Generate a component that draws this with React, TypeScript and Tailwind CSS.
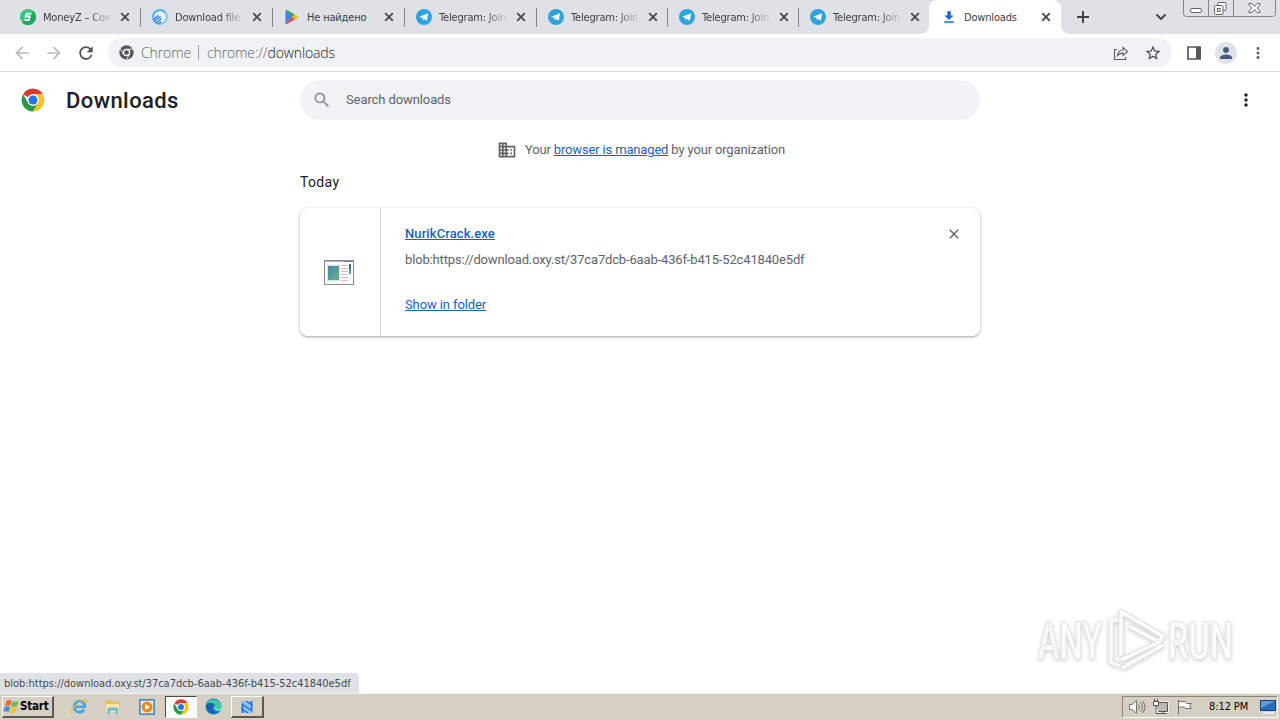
import React from "react";
import {
  MdArrowBack,
  MdArrowForward,
  MdClose,
  MdDomain,
  MdMoreVert,
  MdPerson,
  MdRefresh,
  MdSearch,
  MdStarBorder,
} from "react-icons/md";

const ChromeLogo = ({ className }: { className: string }) => (
  <svg viewBox="0 0 48 48" className={className}>
    <circle cx="24" cy="24" r="23" fill="#fff" />
    <path d="M4.1 12.5A23 23 0 0 1 43.9 12.5H24A11.5 11.5 0 0 0 14 18.3Z" fill="#dd3b30" />
    <path d="M43.9 12.5A23 23 0 0 1 24 47L34 29.7A11.5 11.5 0 0 0 24 12.5Z" fill="#fcc31e" />
    <path d="M24 47A23 23 0 0 1 4.1 12.5L14 29.7A11.5 11.5 0 0 0 34 29.7Z" fill="#2a9a46" />
    <circle cx="24" cy="24" r="11.5" fill="#fff" />
    <circle cx="24" cy="24" r="9" fill="#2a72e8" />
  </svg>
);

const ChromeMono = () => (
  <svg viewBox="0 0 48 48" className="h-[15px] w-[15px]">
    <circle cx="24" cy="24" r="23" fill="#54585d" />
    <circle cx="24" cy="24" r="12" fill="#f0f3f5" />
    <circle cx="24" cy="24" r="7.5" fill="#54585d" />
    <path d="M24 13.5H45M14.5 29L4 12M33.5 29L24 47" stroke="#f0f3f5" strokeWidth="3" />
  </svg>
);

const MoneyIcon = () => (
  <svg viewBox="0 0 16 16" className="h-4 w-4">
    <circle cx="8" cy="8" r="8" fill="#2ecb7d" />
    <path d="M13.7 2.3A8 8 0 0 1 2.3 13.7Z" fill="#1fa763" />
    <path d="M11.4 4.600H6.800L5.600 7.500H9.800L8.800 11H4.600" fill="none" stroke="#fff" strokeWidth="1.9" />
  </svg>
);

const FileIcon = () => (
  <svg viewBox="0 0 16 16" className="h-4 w-4">
    <circle cx="8" cy="8" r="6.9" fill="#e6f4fa" stroke="#7cc6ec" strokeWidth="2" />
    <path d="M1 8.200A7.100 7.100 0 0 1 13.500 3.600" fill="none" stroke="#5cb7ea" strokeWidth="2" />
    <path d="M.8 11 6.400 6.400M1.800 13 8.600 7.200M4 14.400 9.400 9.600M6.600 15.200l2.600-2.400" stroke="#2f80e5" strokeWidth="1.400" />
  </svg>
);

const PlayIcon = () => (
  <svg viewBox="0 0 16 16" className="h-4 w-4">
    <path d="M1.5 1.2v13.6L8.4 8Z" fill="#3b82e8" />
    <path d="M1.5 1.2 8.4 8l2.4-2.5L3 1Q2 .5 1.5 1.2Z" fill="#32a350" />
    <path d="M1.5 14.8 8.4 8l2.4 2.5L3 15Q2 15.5 1.5 14.8Z" fill="#e6453a" />
    <path d="M10.8 5.5 8.4 8l2.4 2.5 3.6-2q.8-.5 0-1Z" fill="#f9bc15" />
  </svg>
);

const TelegramIcon = () => (
  <svg viewBox="0 0 16 16" className="h-4 w-4">
    <circle cx="8" cy="8" r="8" fill="#2ea3dc" />
    <path d="M3.2 7.8 12.1 4.3 10.8 11.7 8.3 9.9 7 11.2 6.6 9Z" fill="#fff" />
    <path d="M6.6 9 10.3 6.1 7.5 9.4 7 11.2Z" fill="#b7d9ec" />
  </svg>
);

const DownloadIcon = () => (
  <svg viewBox="0 0 16 16" className="h-4 w-4">
    <path d="M6.3 2.3h3.5v4.2h2.7L8 11 3.5 6.5h2.8ZM3.3 12.2h9.6v1.5H3.3Z" fill="#1a6bd0" />
  </svg>
);

const tabs = [
  { title: "MoneyZ – Сок", icon: <MoneyIcon />, width: "w-[132px]", fade: true },
  { title: "Download file", icon: <FileIcon />, width: "w-[132px]", fade: true },
  { title: "Не найдено", icon: <PlayIcon />, width: "w-[132px]" },
  { title: "Telegram: Join", icon: <TelegramIcon />, width: "w-[132px]", fade: true },
  { title: "Telegram: Join", icon: <TelegramIcon />, width: "w-[131px]", fade: true },
  { title: "Telegram: Join", icon: <TelegramIcon />, width: "w-[131px]", fade: true },
  { title: "Telegram: Join", icon: <TelegramIcon />, width: "w-[130px]", fade: true },
  { title: "Downloads", icon: <DownloadIcon />, width: "w-[132px]", active: true },
];

const TabStrip = () => (
  <div className="flex h-[34px] bg-[#dee1e6] pl-[9px]">
    {tabs.map((tab, i) => (
      <div
        key={i}
        className={`relative flex h-[34px] shrink-0 items-center ${tab.width} ${
          tab.active ? "rounded-t-lg bg-white pl-3" : "pl-[11px]"
        }`}
      >
        {tab.icon}
        <span
          className={`ml-[7px] w-[70px] whitespace-nowrap pt-px text-[11px] leading-4 tracking-[-0.18px] text-[#3c4043] ${
            tab.fade ? "[mask-image:linear-gradient(to_right,black_65%,transparent_100%)]" : ""
          }`}
        >
          {tab.title}
        </span>
        <svg viewBox="0 0 10 10" className="ml-[7px] h-[10px] w-[10px] shrink-0">
          <path d="M1.2 1.2 8.8 8.8M8.8 1.2 1.2 8.8" stroke="#45494d" strokeWidth="1.8" />
        </svg>
        {i < 6 && <span className="absolute right-0 top-2 h-[19px] w-px bg-[#85888d]" />}
        {tab.active && (
          <>
            <span className="absolute -left-2 bottom-0 h-2 w-2 bg-[radial-gradient(circle_at_0_0,transparent_7.5px,white_8px)]" />
            <span className="absolute -right-2 bottom-0 h-2 w-2 bg-[radial-gradient(circle_at_100%_0,transparent_7.5px,white_8px)]" />
          </>
        )}
      </div>
    ))}
    <svg viewBox="0 0 14 14" className="ml-[15px] mt-[10px] h-[14px] w-[14px] shrink-0">
      <path d="M7 1v12M1 7h12" stroke="#3c4043" strokeWidth="1.9" />
    </svg>
    <svg viewBox="0 0 12 8" className="ml-[65px] mt-[13px] h-2 w-3 shrink-0">
      <path d="M1.5 1.5 6 6l4.5-4.5" fill="none" stroke="#3c4043" strokeWidth="1.8" />
    </svg>
    <svg viewBox="0 0 93 18" className="ml-4 h-[18px] w-[93px] shrink-0" fill="none" stroke="#83878e">
      <path d="M.5 0v13.500q0 3 3 3h86q3 0 3-3V0M25.500 0v16M50.500 0v16" />
      <rect x="7.500" y="8.500" width="11" height="4" rx="1.500" fill="#fff" stroke="#62666c" />
      <g stroke="#62666c" fill="#fff">
        <rect x="35" y="2.500" width="8" height="8" rx="1" />
        <rect x="31.500" y="5.500" width="8.500" height="9" rx="1" />
        <rect x="34.500" y="8.500" width="2.500" height="3" />
        <path d="M66 3.500h3l2.500 3 2.500-3h3v1.500l-3 3 3 3v1.500h-3l-2.500-3-2.500 3h-3V11l3-3-3-3Z" />
      </g>
    </svg>
  </div>
);

const Toolbar = () => (
  <div className="flex h-[38px] items-center border-b border-[#d9dbde] bg-white pl-3 text-[#5f6368]">
    <MdArrowBack className="h-5 w-5 text-[#b9bbbe]" />
    <MdArrowForward className="ml-3 h-5 w-5 text-[#b9bbbe]" />
    <MdRefresh className="ml-3 h-5 w-5 text-[#4b4f54]" />
    <div className="ml-3 flex h-[29px] w-[1064px] items-center rounded-full bg-[#f0f3f5] pl-[11px] pr-[10px] font-['Open_Sans'] text-sm font-light">
      <ChromeMono />
      <span className="ml-[7px] w-[50px] whitespace-nowrap tracking-[-0.1px]">Chrome</span>
      <span className="ml-[7px] h-[15px] w-px bg-[#9a9da1]" />
      <span className="ml-2 whitespace-nowrap tracking-[-0.12px]">
        chrome://<span className="text-[#202124]">downloads</span>
      </span>
      <svg viewBox="0 0 16 16" className="ml-auto h-4 w-4" fill="none" stroke="#5f6368" strokeWidth="1.2">
        <path d="M4 4.500H1.500v10h11v-2.500M4.500 10.500Q5 5 10 5V2.500l4.500 4-4.500 4V7.800Q7 7.800 4.500 10.500Z" />
      </svg>
      <MdStarBorder className="ml-[15px] h-[18px] w-[18px] text-[#45494e]" />
    </div>
    <svg viewBox="0 0 14 14" className="ml-[15px] h-[14px] w-[14px] shrink-0">
      <path d="M1 1h12v12H1Z" fill="none" stroke="#54585d" strokeWidth="1.7" />
      <path d="M9 1h5v12H9Z" fill="#54585d" />
    </svg>
    <span className="ml-[14px] flex h-[22px] w-[22px] items-center justify-center rounded-full bg-[#dfe2e6]">
      <MdPerson className="h-[18px] w-[18px] text-[#4a5a7a]" />
    </span>
    <MdMoreVert className="ml-3 h-[18px] w-[18px]" />
  </div>
);

const ExeIcon = () => (
  <svg viewBox="0 0 32 27" className="h-[27px] w-8">
    <defs>
      <linearGradient id="preview" x1="0" y1="0" x2="1" y2="1">
        <stop offset="0" stopColor="#4b82ae" />
        <stop offset="1" stopColor="#62b581" />
      </linearGradient>
    </defs>
    <rect x="1.500" y="1.500" width="29" height="24" fill="#fbfbfc" stroke="#85889a" />
    <path d="M2 2.500h28" stroke="#b4b7c4" />
    <path d="M22 2.500h7" stroke="#555b72" strokeDasharray="1.500 1" />
    <rect x="4" y="5.500" width="13" height="17" fill="#dfe5ec" />
    <rect x="5" y="7" width="11" height="14" fill="url(#preview)" />
    <path d="M18 6.500h7M18 9.500h7M18 12.500h7M18 15.500h7M18 18.500h7M18 21.500h7" stroke="#cfbfc5" />
    <path d="M27 5v5" stroke="#405f88" strokeWidth="2" />
    <path d="M27 10v5" stroke="#55a077" strokeWidth="2" />
  </svg>
);

const DownloadsPage = () => (
  <main className="relative min-h-0 flex-1 bg-white font-[Roboto,sans-serif] text-[13px] text-[#5f6368]">
    <header className="flex h-14 items-center pl-[21px] pr-6">
      <ChromeLogo className="h-6 w-6" />
      <h1 className="ml-[21px] w-[234px] text-[22px] font-medium tracking-[0.42px] text-[#202124]">Downloads</h1>
      <div className="flex h-10 w-[680px] items-center rounded-full bg-[#f0f3f5] pl-3">
        <MdSearch className="h-5 w-5 text-[#8b8f94]" />
        <span className="ml-[14px] tracking-[-0.1px]">Search downloads</span>
      </div>
      <MdMoreVert className="ml-auto h-5 w-5 text-[#202124]" />
    </header>
    <div className="mx-auto w-[680px]">
      <div className="flex h-11 items-center justify-center pl-0.5">
        <MdDomain className="h-5 w-5" />
        <p className="ml-2 whitespace-nowrap tracking-[-0.16px]">
          Your <a className="text-[#1b62bd] underline">browser is managed</a> by your organization
        </p>
      </div>
      <h2 className="h-9 text-sm leading-5 tracking-[0.35px] text-[#202124]">Today</h2>
      <article className="flex h-32 rounded-lg bg-white shadow-[0_1px_2px_rgba(60,64,67,0.3),0_1px_3px_1px_rgba(60,64,67,0.15)]">
        <div className="flex w-[81px] items-center justify-center border-r border-[#d5d7da] pr-0.5">
          <ExeIcon />
        </div>
        <div className="flex-1 pl-6 pt-4">
          <a className="block font-medium leading-5 tracking-[0.1px] text-[#1b62bd] underline">NurikCrack.exe</a>
          <p className="mt-1.5 leading-5 tracking-[-0.155px]">blob:https://download.oxy.st/37ca7dcb-6aab-436f-b415-52c41840e5df</p>
          <a className="mt-[25px] block leading-5 tracking-[-0.1px] text-[#1b62bd] underline">Show in folder</a>
        </div>
        <MdClose className="mr-[18px] mt-[18px] h-4 w-4" />
      </article>
    </div>
    <svg viewBox="0 0 210 76" className="absolute bottom-4 right-[38px] h-[76px] w-[210px] drop-shadow-[0_1px_2px_rgba(0,0,0,0.2)]">
      <g fill="#fcfcfc" stroke="#e6e6e6" strokeWidth="0.8" fontFamily="Roboto, sans-serif" fontSize="51" fontWeight="500">
        <text x="6" y="58" textLength="64" lengthAdjust="spacingAndGlyphs">ANY</text>
        <text x="136" y="58" textLength="65" lengthAdjust="spacingAndGlyphs">RUN</text>
      </g>
      <g fill="none" strokeLinejoin="round">
        <path d="M86 18 79 20v41l9 4M90 67 131 44" stroke="#e2e2e2" strokeWidth="5" />
        <path d="M86 18 79 20v41l9 4M90 67 131 44" stroke="#fafafa" strokeWidth="3.500" />
        <path d="M89 55V11L131 35 127 41 97 25" stroke="#e0e0e0" strokeWidth="5" />
        <path d="M89 55V11L131 35 127 41 97 25" stroke="#fcfcfc" strokeWidth="3.500" />
        <path d="M89 59 127 41" stroke="#e4e4e4" strokeWidth="5" />
        <path d="M89 59 127 41" stroke="#fafafa" strokeWidth="3.500" />
      </g>
    </svg>
    <div className="absolute bottom-0 left-0 h-5 w-[359px] whitespace-nowrap rounded-tr bg-[#dee1e6] pl-1 font-['DejaVu_Sans_Condensed','DejaVu_Sans',sans-serif] text-[11px] leading-[21px] tracking-[-0.03px] text-[#45494d]">
      blob:https://download.oxy.st/37ca7dcb-6aab-436f-b415-52c41840e5df
    </div>
  </main>
);

const StartFlag = () => (
  <svg viewBox="0 0 17 17" className="h-[17px] w-[17px] shrink-0">
    <path d="M3.500 3Q6 1.200 8.500 2.800L7.200 8Q4.700 6.500 2 8Z" fill="#e8682e" />
    <path d="M9.500 3.200Q12 4.600 15.500 3L14 8Q11 9.600 8.200 8.200Z" fill="#79b943" />
    <path d="M1.800 9Q4.500 7.600 7 9L5.600 14Q3 12.500.3 14Z" fill="#438cd2" />
    <path d="M8 9.300Q10.500 10.700 13.700 9.200L12.300 14.200Q9.500 15.700 6.600 14.200Z" fill="#f5c42d" />
  </svg>
);

const Taskbar = () => (
  <footer className="flex h-[27px] items-start border-t border-[#f5f3ef] bg-[#d6cfc4] pl-0.5 pr-0.5 pt-0.5 shadow-[0_-1px_0_#d6cfc4]">
    <button className="flex h-[22px] w-[52px] items-center border border-b-2 border-r-2 border-b-[#5c5852] border-l-white border-r-[#5c5852] border-t-white text-[11.500px] font-bold tracking-[-0.2px] text-black">
      <StartFlag />
      <span className="whitespace-nowrap pt-px">Start</span>
    </button>
    <svg viewBox="0 0 18 18" className="ml-4 mt-0.5 h-[18px] w-[18px]">
      <path d="M14.200 11.500A5.500 5.500 0 1 1 15 8.800H5" fill="none" stroke="#40a9e0" strokeWidth="2.600" />
      <path d="M2 15.500C-1 13 9 1.500 16 2.200c1 .4.600 2-.5 3.500" fill="none" stroke="#e5b63d" strokeWidth="1.300" />
    </svg>
    <svg viewBox="0 0 18 18" className="ml-4 mt-0.5 h-[18px] w-[18px]">
      <path d="M1.500 2h5l1.500 1.500h7.500v10h-14Z" fill="#e5c15b" />
      <path d="M2 6h13v8H2Z" fill="#f9e6a0" />
      <path d="M3.500 16V11q0-1.500 1.500-1.500h7.500q1.500 0 1.500 1.500v5h-2.500v-3.500H6V16Z" fill="#72b9dc" />
    </svg>
    <svg viewBox="0 0 16 18" className="ml-[17px] mt-0.5 h-[18px] w-4">
      <rect x=".5" y="1.500" width="15" height="15" fill="#76a8d3" stroke="#5688b8" />
      <rect x="2" y="3" width="12" height="12" fill="#e7edf2" />
      <circle cx="8" cy="9" r="5.500" fill="#ed8b18" />
      <path d="M6.300 6 11 9l-4.700 3Z" fill="#fff" />
    </svg>
    <div className="ml-[10px] flex h-[22px] w-8 items-center justify-center border border-b-[#faf9f7] border-l-[#4c4945] border-r-[#faf9f7] border-t-[#4c4945] bg-[#fafafa] pr-px">
      <ChromeLogo className="h-4 w-4" />
    </div>
    <svg viewBox="0 0 17 17" className="ml-2 mt-0.5 h-[17px] w-[17px]">
      <circle cx="8.500" cy="8.500" r="8" fill="#168bd0" />
      <path d="M1 6.500C3 0 14 .2 16.400 7.500 17 11.500 12 12 10 10.500c2-4-3-7-9-4Z" fill="#43c8a2" />
      <path d="M1 6.500C4 3.500 9 4.500 9.500 7.500 7 7.500 6 12 12.500 14.800A8 8 0 0 1 1 6.500Z" fill="#1463b1" />
      <path d="M9.800 8c-1.500 2-.5 5 5.700 4.400l1.300-2.500q-3 2-6.600.6Z" fill="#d6cfc4" />
    </svg>
    <div className="ml-[9px] flex h-[22px] w-[33px] items-center justify-center border border-b-2 border-r-2 border-b-[#5c5852] border-l-white border-r-[#5c5852] border-t-white">
      <svg viewBox="0 0 12 12" className="h-3 w-3">
        <path d="M0 0h12v12H0Z" fill="#8fc0f1" />
        <path d="M1.500 12V3.500L10.500 9.500V0M0 7.500 7 12M5 0l7 4.500" stroke="#216fd0" strokeWidth="1.400" fill="none" />
      </svg>
    </div>
    <div className="ml-auto flex h-[22px] w-[156px] items-center border border-b-white border-l-[#8b867d] border-r-white border-t-[#8b867d] pl-[5px] text-[11px] text-black">
      <svg viewBox="0 0 18 16" className="h-4 w-[18px]" fill="none" stroke="#77736e">
        <path d="M1.500 5.500H4L8.500 1.500v13L4 10.500H1.500Z" fill="#fbfaf8" />
        <path d="M10.500 5.500q2 2.500 0 5M12.500 3.500q4 4.500 0 9M14.500 2q5 6 0 12" />
      </svg>
      <svg viewBox="0 0 17 16" className="ml-[6px] h-4 w-[17px]" fill="none" stroke="#55524e">
        <path d="M4.500 3.500h11v9h-11Z" fill="#c9c7c3" stroke="#f3f1ed" strokeWidth="3" />
        <path d="M4.500 3.500h11v9h-11Z" fill="#bdbbb7" />
        <path d="M7 14.500h8M11 12.500v2" />
        <path d="M1.500 2.500h5v4h-5ZM2.500 0v3M5.500 0v3M4 7v7.500h3" fill="#fff" />
      </svg>
      <svg viewBox="0 0 17 16" className="ml-[7px] h-4 w-[17px]" fill="#fff" stroke="#77736e">
        <path d="M2.500 1v14.500M2.500 2.500h7l1 2h5l-2 2.500 2 2.500h-6l-1-1.500h-6Z" />
      </svg>
      <span className="ml-4 w-[41px] whitespace-nowrap pt-px tracking-[-0.1px]">8:12 PM</span>
      <svg viewBox="0 0 16 16" className="ml-[10px] h-4 w-4">
        <rect x=".5" y="1.500" width="15" height="10" fill="#296ebd" stroke="#1d4175" />
        <path d="M1 2h14L1 9Z" fill="#5d9bd9" />
        <path d="M3 14h11" stroke="#e7edf4" strokeWidth="2" />
      </svg>
    </div>
  </footer>
);

const App = () => {
  return (
    <div className="flex h-[720px] w-[1280px] flex-col overflow-hidden bg-white font-['DejaVu_Sans_Condensed','DejaVu_Sans',sans-serif]">
      <TabStrip />
      <Toolbar />
      <DownloadsPage />
      <Taskbar />
    </div>
  );
};

export default App;
